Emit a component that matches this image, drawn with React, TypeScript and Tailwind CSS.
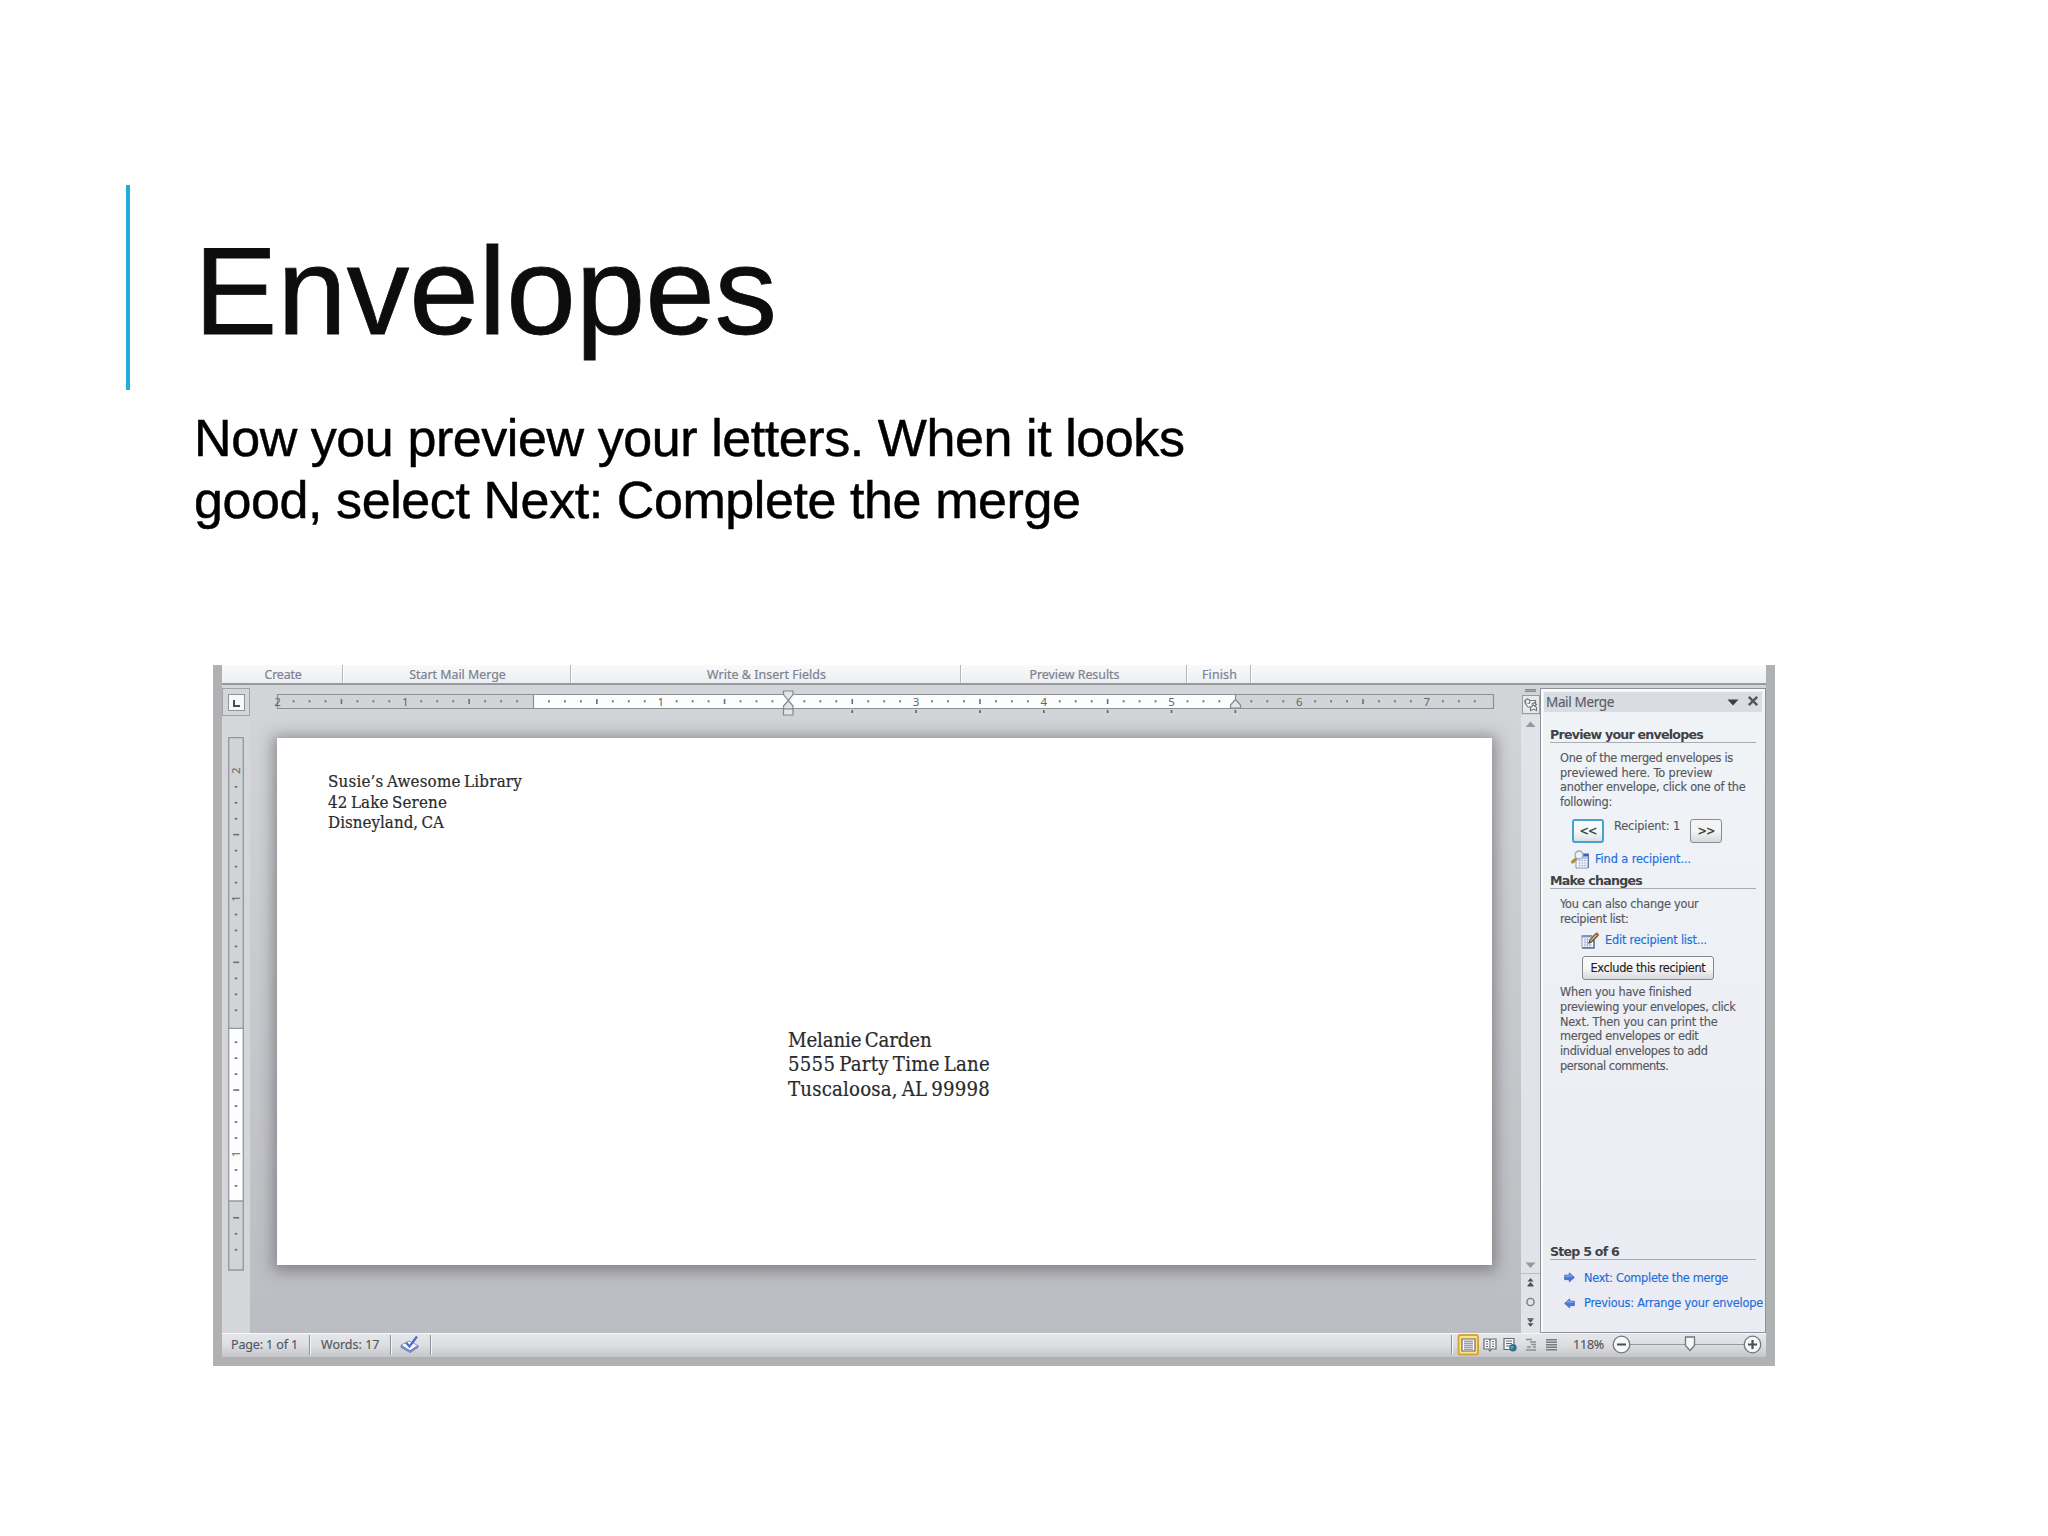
import { useLayoutEffect, useRef, type ReactNode } from "react";

const UI = "font-['DejaVu_Sans_Condensed','DejaVu_Sans',sans-serif] [font-stretch:condensed]";
const SEGOE = "font-['Noto_Sans','Open_Sans',sans-serif]";
const SERIF = "font-['DejaVu_Serif_Condensed','DejaVu_Serif',serif] [font-stretch:condensed]";

/** A single line of text, tracked so that it is exactly `w` pixels wide. */
function Line({ w, children, className = "" }: { w: number; children: string; className?: string }) {
  const ref = useRef<HTMLSpanElement>(null);
  useLayoutEffect(() => {
    const el = ref.current;
    if (!el) return;
    el.style.letterSpacing = "0px";
    const natural = el.getBoundingClientRect().width;
    el.style.letterSpacing = `${(w - natural) / children.length}px`;
  }, [w, children]);
  return (
    <span className={`block ${className}`}>
      <span ref={ref} className="inline-block whitespace-pre">
        {children}
      </span>
    </span>
  );
}

function RibbonGroup({ label, w, className }: { label: string; w: number; className: string }) {
  return (
    <div className={`flex h-full shrink-0 justify-center border-r border-[#b4b7bd] pt-px pl-[2px] shadow-[1px_0_0_#fff] ${className}`}>
      <Line w={w}>{label}</Line>
    </div>
  );
}

const UNIT = 127.7;

function HorizontalRuler() {
  const zero = 256;
  const marks: ReactNode[] = [];
  for (let i = -16; i <= 59; i++) {
    const x = zero + (i * UNIT) / 8;
    if (i === 0 || i === 16 || i === 44) continue;
    if (i % 8 === 0) {
      marks.push(
        <text key={i} x={x} y={11.8} textAnchor="middle" fontSize={11.5} fill="#62656b">
          {Math.abs(i / 8)}
        </text>
      );
    } else if (i % 4 === 0) {
      marks.push(<rect key={i} x={x - 0.8} y={5} width={1.6} height={5} fill="#6c6f76" />);
    } else {
      marks.push(<rect key={i} x={x - 0.9} y={6.3} width={1.8} height={2} fill="#6c6f76" />);
    }
  }
  const tabs = [20, 24, 28, 32, 36, 40, 44];
  return (
    <svg width="1218" height="30" viewBox="0 0 1218 30" className={`block overflow-visible ${SEGOE}`}>
      <rect x={0.5} y={0.5} width={1216} height={14} fill="#d2d3d6" />
      <rect x={zero} y={0.5} width={702.5} height={14} fill="#fcfdfd" />
      <path d="M0.5 0.5H1216.5V14.5H0.5Z M256.5 0.5V14.5" fill="none" stroke="#8d9096" strokeWidth={1.2} />
      {marks}
      {tabs.map((t) => (
        <rect key={t} x={zero + (t * UNIT) / 8 - 0.8} y={16} width={1.6} height={3} fill="#5f6268" />
      ))}
      <g fill="#e4e5e8" stroke="#85888e" strokeWidth={1.2}>
        <path d="M506.5 -3H516V0.5L511.3 6.5L506.5 0.5Z" />
        <path d="M511.3 6.5L516 12V15H506.5V12Z" />
        <path d="M506.5 15H516V21H506.5Z" />
        <path d="M958.5 0.5V6" />
        <path d="M958.5 5.5L963.5 11V14H953.5V11Z" />
      </g>
    </svg>
  );
}

function VerticalRuler() {
  const zero = 289.2;
  const marks: ReactNode[] = [];
  for (let i = -16; i <= 14; i++) {
    const y = zero + (i * UNIT) / 8;
    if (i === 0 || i === 11) continue;
    if (i % 8 === 0) {
      marks.push(
        <text key={i} transform={`translate(12.3 ${y}) rotate(-90)`} textAnchor="middle" fontSize={11.5} fill="#62656b">
          {Math.abs(i / 8)}
        </text>
      );
    } else if (i % 4 === 0) {
      marks.push(<rect key={i} x={5.2} y={y - 0.8} width={6} height={1.6} fill="#6c6f76" />);
    } else {
      marks.push(<rect key={i} x={6.7} y={y - 0.8} width={2.6} height={1.7} fill="#6c6f76" />);
    }
  }
  return (
    <svg width="16" height="534" viewBox="0 0 16 534" className={`block ${SEGOE}`}>
      <rect x={0.5} y={0.5} width={15} height={532.5} fill="#d1d4d6" />
      <rect x={0.5} y={291} width={15} height={173} fill="#fdfdfe" />
      <path d="M0.7 0.7H15.3V533H0.7Z M0.7 291.3H15.3 M0.7 464H15.3" fill="none" stroke="#94979c" strokeWidth={1.3} />
      {marks}
    </svg>
  );
}

function ScrollBar() {
  return (
    <div className="flex w-[19px] shrink-0 flex-col items-center bg-[#e0e3e8]">
      <div className="flex h-[30px] w-full flex-col items-center bg-[#d2d4d8] pt-[4px]">
        <div className="h-[3px] w-[11px] border-y border-[#85888d] bg-[#aaa]" />
        <div className="mt-[3px] flex h-[19px] w-[18px] items-center justify-center border border-[#979aa0] bg-[#e6e8eb]">
          <svg width="14" height="14" viewBox="0 0 14 14" fill="#f7f7f8" stroke="#73767c" strokeWidth={1.1}>
            <path d="M1 5V2.5L3.5 1L5.5 2.5H11.5V7" />
            <circle cx={3.6} cy={3.6} r={2.3} />
            <path d="M1 5L4 9H9L12.5 6.5L10 4.5L7.5 6.5" />
            <path d="M6.5 9.5L9.5 7L12.5 9.5V12.5L9.5 11L6.5 12.5Z" />
          </svg>
        </div>
      </div>
      <svg width="11" height="7" viewBox="0 0 11 7" className="mt-[6px]">
        <path d="M0.5 6L5.5 0.5L10.5 6Z" fill="#96999e" />
      </svg>
      <div className="flex-1" />
      <svg width="19" height="74" viewBox="0 0 19 74">
        <path d="M4.5 3.5H14.5L9.5 9Z" fill="#96999e" />
        <path d="M0 14.5H19" stroke="#b9bcc1" />
        <g fill="#4c4f55">
          <path d="M6.5 22.5L9.5 19L12.5 22.5Z M6.5 26.5L9.5 23L12.5 26.5Z M6.5 26.3H12.5V27.5H6.5Z" />
          <path d="M6.5 60.3L9.5 63.8L12.5 60.3Z M6.5 64.3L9.5 67.8L12.5 64.3Z M6.5 59.3H12.5V60.5H6.5Z" />
        </g>
        <circle cx={9.5} cy={43} r={3.6} fill="none" stroke="#777a80" strokeWidth={1.4} />
      </svg>
    </div>
  );
}

function PaneHeading({ w, children }: { w: number; children: string }) {
  return (
    <div className="h-[16px] w-[206px] border-b border-[#a9acb3] font-['DejaVu_Sans',sans-serif] text-[12.6px] leading-[16px] font-bold text-[#3f4248] [font-stretch:normal] [-webkit-text-stroke:0]">
      <Line w={w} className="-mt-px">{children}</Line>
    </div>
  );
}

function SearchListIcon() {
  return (
    <svg width="19" height="19" viewBox="0 0 19 19" className="shrink-0">
      <path d="M5 8H17V18H5Z" fill="#fff" stroke="#7e8fbf" />
      <path d="M12 3.5H18V6.5H12Z" fill="#3c62c8" />
      <path d="M17.5 4V18" stroke="#5c74b4" />
      <path d="M7 10.5H16M7 13H16M7 15.5H16M8.5 9V17M11.3 9V17M14 9V17" stroke="#b9c5de" strokeWidth={0.9} />
      <path d="M5 9L1.5 12" stroke="#b98a35" strokeWidth={3} strokeLinecap="round" />
      <circle cx={8} cy={5} r={4} fill="#e9f2fa" stroke="#9aa7ba" strokeWidth={1.3} />
    </svg>
  );
}

function EditListIcon() {
  return (
    <svg width="19" height="19" viewBox="0 0 19 19" className="shrink-0">
      <path d="M1 5H13V16.5H1Z" fill="#fff" stroke="#8796c0" />
      <path d="M0.5 4H11V6.5H0.5Z" fill="#7d94d4" />
      <path d="M2.5 9H11M2.5 11.5H11M2.5 14H11M4 7V16M6.5 7V16M9 7V16" stroke="#a9b6d6" strokeWidth={0.9} />
      <path d="M1 17H13V9" fill="none" stroke="#5f6f9e" strokeWidth={1.4} />
      <path d="M8 12L9 9L15 2.5L17 4.5L11 10.5Z" fill="#e0b75c" stroke="#5d4b2c" strokeWidth={1.1} />
      <path d="M14.5 3L16 1.3L18 3.2L16.6 4.8Z" fill="#c4574e" />
      <path d="M8 12L8.6 10.2L9.8 11.3Z" fill="#333" />
    </svg>
  );
}

function Arrow({ flip = false }: { flip?: boolean }) {
  return (
    <svg width="11" height="11" viewBox="0 0 11 11" className={flip ? "shrink-0 -scale-x-100" : "shrink-0"}>
      <path d="M0.7 3.2H5.3V0.9L10.3 5.4L5.3 9.9V7.6H0.7Z" fill="#4a78d8" stroke="#3a5fb6" strokeWidth={0.8} />
      <path d="M1.3 4.2H6V3L8 4.8" fill="none" stroke="#9dbcf4" strokeWidth={0.9} />
    </svg>
  );
}

const LINK = "text-[#1a6edc]";

function TaskPane() {
  return (
    <aside
      className={`flex w-[226px] shrink-0 flex-col overflow-hidden border border-t-[1.5px] border-[#8e9198] bg-linear-to-b from-[#f0f4f7] to-[#eaebf3] pl-[2px] text-[12.6px] leading-[14.7px] text-[#55585e] shadow-[inset_2px_2px_0_#fbfcfd] [-webkit-text-stroke:0.15px] ${UI}`}
    >
      <div className={`mt-[3px] ml-[1px] flex h-[20px] w-[218px] items-center bg-[#d9dce2] pl-[2px] text-[#5a5d65] ${SEGOE}`}>
        <Line w={68} className="text-[13.5px] leading-[20px]">Mail Merge</Line>
        <svg width="12" height="7" viewBox="0 0 12 7" className="ml-[113px]">
          <path d="M0.5 0.5H11.5L6 6.5Z" fill="#3b3e44" />
        </svg>
        <svg width="12" height="12" viewBox="0 0 12 12" className="-mt-[2px] ml-[8px]">
          <path d="M1.8 1.8L10.2 10.2M10.2 1.8L1.8 10.2" stroke="#55585e" strokeWidth={2.5} />
        </svg>
      </div>

      <div className="mt-[16px] pl-[7px]">
        <PaneHeading w={153}>Preview your envelopes</PaneHeading>
        <div className="mt-[8px] ml-[10px]">
          <Line w={173}>One of the merged envelopes is</Line>
          <Line w={152.5}>previewed here. To preview</Line>
          <Line w={185.5}>another envelope, click one of the</Line>
          <Line w={52}>following:</Line>
        </div>
        <div className="mt-[9px] ml-[22px] flex h-[25px] items-start">
          <button className="flex h-[24px] w-[32px] items-center justify-center rounded-[3px] border-2 border-[#45a3cd] bg-linear-to-b from-[#f7fafb] from-50% to-[#d9e0e4] pt-[2px] text-[12.5px] text-[#33363b]">
            <Line w={17}>{"<<"}</Line>
          </button>
          <Line w={66} className="ml-[10px] leading-[14px]">Recipient: 1</Line>
          <button className="ml-[10px] flex h-[24px] w-[32px] items-center justify-center rounded-[3px] border-[1.5px] border-[#8a8c90] bg-linear-to-b from-[#f4f4f5] from-50% to-[#d7d8da] pt-[2px] text-[12.5px] text-[#33363b]">
            <Line w={17}>{">>"}</Line>
          </button>
        </div>
        <div className={`mt-[6px] ml-[21px] flex h-[19px] items-center gap-[5px] ${LINK}`}>
          <SearchListIcon />
          <Line w={96}>Find a recipient...</Line>
        </div>
        <div className="mt-[5px]">
          <PaneHeading w={92}>Make changes</PaneHeading>
        </div>
        <div className="mt-[8px] ml-[10px]">
          <Line w={138.5}>You can also change your</Line>
          <Line w={68.5}>recipient list:</Line>
        </div>
        <div className={`mt-[5px] ml-[31px] flex h-[19px] items-center gap-[5px] ${LINK}`}>
          <EditListIcon />
          <Line w={102}>Edit recipient list...</Line>
        </div>
        <button className="mt-[6px] ml-[32px] flex h-[24px] w-[132px] items-center justify-center rounded-[3px] border-[1.5px] border-[#85878b] bg-linear-to-b from-[#f8f8f9] from-50% to-[#d7d8da] text-[#1c1d20]">
          <Line w={115}>Exclude this recipient</Line>
        </button>
        <div className="mt-[5px] ml-[10px]">
          <Line w={131.5}>When you have finished</Line>
          <Line w={175.5}>previewing your envelopes, click</Line>
          <Line w={157.5}>Next. Then you can print the</Line>
          <Line w={138.5}>merged envelopes or edit</Line>
          <Line w={147.5}>individual envelopes to add</Line>
          <Line w={108.5}>personal comments.</Line>
        </div>
      </div>

      <div className="mt-auto pb-[21px] pl-[7px]">
        <PaneHeading w={69}>Step 5 of 6</PaneHeading>
        <div className={`mt-[11px] ml-[14px] flex items-center gap-[9px] ${LINK}`}>
          <Arrow />
          <Line w={144}>Next: Complete the merge</Line>
        </div>
        <div className={`mt-[11px] ml-[14px] flex items-center gap-[9px] ${LINK}`}>
          <Arrow flip />
          <Line w={179}>Previous: Arrange your envelope</Line>
        </div>
      </div>
    </aside>
  );
}

function Divider() {
  return <div className="h-[20px] w-[2px] border-l border-[#8f9297] bg-[#f4f5f6]" />;
}

function StatusBar() {
  return (
    <footer
      className={`flex h-[24px] shrink-0 items-center bg-linear-to-b from-[#e6e8eb] via-[#dcdee1] to-[#c4c6ca] text-[12.5px] leading-[16px] text-[#54575d] shadow-[inset_0_1px_0_#f5f6f7] [-webkit-text-stroke:0.15px] ${SEGOE}`}
    >
      <Line w={67} className="ml-[9px]">Page: 1 of 1</Line>
      <div className="ml-[11px]"><Divider /></div>
      <Line w={58.5} className="ml-[10px]">Words: 17</Line>
      <div className="ml-[10px]"><Divider /></div>
      <svg width="20" height="19" viewBox="0 0 20 19" className="-mt-[2px] ml-[8px]">
        <path d="M1 10L9 6L18 10.5L10 16Z" fill="#f8f9fc" stroke="#8b97bb" />
        <path d="M1 10.5V12.5L10 17.5L18 12.5V10.5L10 15.8Z" fill="#8fa0d4" stroke="#5f73b3" strokeWidth={0.8} />
        <path d="M6 7.5L9.5 11.5L17 1.5" fill="none" stroke="#4e6ccb" strokeWidth={2.2} />
      </svg>
      <div className="ml-[10px]"><Divider /></div>
      <div className="ml-auto"><Divider /></div>
      <svg width="108" height="24" viewBox="0 0 108 24" className="ml-[4px]">
        <rect x={1.5} y={2} width={19.5} height={19.5} rx={2} fill="#fbe38a" stroke="#d7a33a" strokeWidth={2} />
        <path d="M5 6H18V18H5Z" fill="#fff" stroke="#63666c" strokeWidth={1.2} />
        <path d="M7 8.2H16M7 10.2H16M7 12.2H16M7 14.2H16M7 16.2H16" stroke="#63666c" strokeWidth={0.9} />
        <g fill="#f4f5f6" stroke="#66696f" strokeWidth={1.2}>
          <path d="M27 6H32L33 7L34 6H39V16H34.5L33 18L31.5 16H27Z" />
          <path d="M33 7V17M29 8.5H31M29 11H31M29 13.5H31M35 8.5H37M35 11H37M35 13.5H37" strokeWidth={1} />
          <path d="M47 5.5H57V16.5H47Z" />
          <path d="M49 8H55M49 10.5H55M49 13H53" strokeWidth={1} />
        </g>
        <circle cx={56} cy={14.8} r={3.7} fill="#2f6f9c" />
        <path d="M53.5 13.5C55 12 57.5 13 56.5 14.5S54.5 17 54 16Z" fill="#5cb06c" />
        <path d="M69 6.5H75M73 9H79M74 11.5H79M70 14H74M76 14H79M69 17H79" stroke="#8b8e94" strokeWidth={1.3} />
        <path d="M89 6.8H100M89 9.3H100M89 11.8H100M89 14.3H100M89 16.8H100" stroke="#777a80" strokeWidth={1.5} />
      </svg>
      <Line w={31} className="ml-[8px]">118%</Line>
      <svg width="151" height="24" viewBox="0 0 151 24" className="ml-[7px] mr-[4px]">
        <path d="M19 11.5H133" stroke="#96999f" strokeWidth={1.2} />
        <g fill="#f6f7f8" stroke="#74777d" strokeWidth={1.3}>
          <circle cx={10.5} cy={11.5} r={8.3} />
          <circle cx={141.5} cy={11.5} r={8.3} />
          <path d="M74.5 4H83.5V12.5L79 17.5L74.5 12.5Z" />
        </g>
        <path d="M6 11.5H15M137 11.5H146M141.5 7V16" stroke="#4a4d53" strokeWidth={2.2} />
      </svg>
    </footer>
  );
}

function WordWindow() {
  return (
    <section className="mt-[118px] ml-[213px] flex h-[701px] w-[1562px] flex-col border-x-[9px] border-b-[9px] border-[#b0b1b2]">
      <div
        className={`flex h-[20px] shrink-0 border-b-2 border-[#96999d] bg-linear-to-b from-[#fafafb] to-[#eceef1] text-[12.4px] leading-[18px] text-[#7c8190] [-webkit-text-stroke:0.2px] ${SEGOE}`}
      >
        <RibbonGroup label="Create" w={37} className="w-[121px]" />
        <RibbonGroup label="Start Mail Merge" w={96.5} className="w-[228px]" />
        <RibbonGroup label="Write & Insert Fields" w={119} className="w-[390px]" />
        <RibbonGroup label="Preview Results" w={90} className="w-[226px]" />
        <RibbonGroup label="Finish" w={35} className="w-[64px]" />
      </div>

      <div className="flex min-h-0 flex-1 bg-linear-to-b from-[#d4d5d8] to-[#bcbdc2]">
        <div className="flex w-[28px] shrink-0 flex-col bg-[#d4d6d9] pt-[3px]">
          <div className="flex h-[28px] w-[28px] items-center justify-center border-[1.5px] border-[#a0a3a8]">
            <div className="flex h-[17px] w-[17px] items-center justify-center border-[1.5px] border-[#909398] bg-[#f7f8fa] pt-[3px] pl-[1px]">
              <div className="h-[7px] w-[7px] border-b-[2.5px] border-l-[2.5px] border-[#4a4d52]" />
            </div>
          </div>
          <div className="mt-[21px] ml-[6px]">
            <VerticalRuler />
          </div>
        </div>

        <div className="flex flex-1 flex-col overflow-hidden pt-[9px] pl-[27px]">
          <HorizontalRuler />
          <article
            className={`mt-[14px] h-[527px] w-[1215px] bg-white pt-[33px] pl-[51px] text-[#2a2a2c] shadow-[0_2px_14px_4px_rgba(80,82,88,0.55)] [-webkit-text-stroke:0.2px] ${SERIF}`}
          >
            <div className="text-[16.8px] leading-[20.5px] [word-spacing:-1.5px]">
              <Line w={194}>Susie’s Awesome Library</Line>
              <Line w={119}>42 Lake Serene</Line>
              <Line w={116}>Disneyland, CA</Line>
            </div>
            <div className="mt-[195px] ml-[460px] text-[20.2px] leading-[24.7px] [word-spacing:-2px]">
              <Line w={143.5}>Melanie Carden</Line>
              <Line w={202}>5555 Party Time Lane</Line>
              <Line w={202}>Tuscaloosa, AL 99998</Line>
            </div>
          </article>
        </div>

        <ScrollBar />
        <div className="flex pt-[3px]">
          <TaskPane />
        </div>
      </div>

      <StatusBar />
    </section>
  );
}

export default function App() {
  return (
    <main className="flex h-[1536px] w-[2048px] flex-col overflow-hidden bg-white font-['Liberation_Sans',Arial,sans-serif]">
      <header className="mt-[185px] ml-[126px] flex h-[205px] border-l-4 border-[#21ace0] pl-[64px]">
        <h1 className="mt-[34px] text-[125px] leading-[144px] text-[#0d0d0d] [-webkit-text-stroke:0.8px]">
          <Line w={583}>Envelopes</Line>
        </h1>
      </header>
      <div className="mt-[17px] ml-[194px] h-[140px] text-[52px] leading-[62px] text-black [-webkit-text-stroke:0.5px]">
        <Line w={990.5}>Now you preview your letters. When it looks</Line>
        <Line w={886.5}>good, select Next: Complete the merge</Line>
      </div>
      <WordWindow />
    </main>
  );
}
